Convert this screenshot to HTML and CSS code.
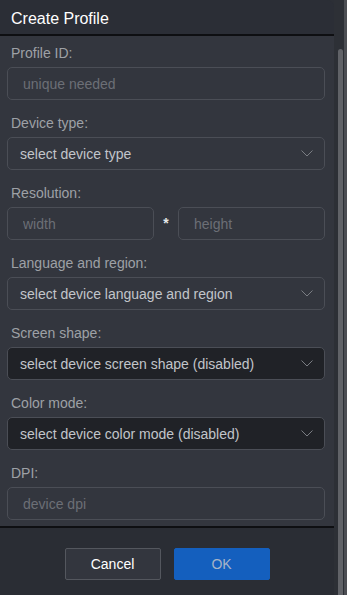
FILE: index.html
```
<!DOCTYPE html>
<html lang="en">
<head>
<meta charset="UTF-8" />
<meta name="viewport" content="width=device-width, initial-scale=1" />
<title>Create Profile</title>
<link rel="stylesheet" href="styles.css">
</head>
<body>
<div class="screen">
  <div class="dialog">
    <div class="dialog-header">Create Profile</div>

    <div class="dialog-body">
      <div class="field">
        <label>Profile ID:</label>
        <input class="text-input" type="text" placeholder="unique needed" />
      </div>

      <div class="field">
        <label>Device type:</label>
        <div class="select">
          <span>select device type</span>
          <svg width="12" height="7" viewBox="0 0 12 7"><path d="M0.5 0.5 L6 6 L11.5 0.5" fill="none" stroke="#7a7d83" stroke-width="1" /></svg>
        </div>
      </div>

      <div class="field">
        <label>Resolution:</label>
        <div class="resolution">
          <input class="text-input" type="text" placeholder="width" />
          <span class="times">*</span>
          <input class="text-input" type="text" placeholder="height" />
        </div>
      </div>

      <div class="field">
        <label>Language and region:</label>
        <div class="select">
          <span>select device language and region</span>
          <svg width="12" height="7" viewBox="0 0 12 7"><path d="M0.5 0.5 L6 6 L11.5 0.5" fill="none" stroke="#7a7d83" stroke-width="1" /></svg>
        </div>
      </div>

      <div class="field">
        <label>Screen shape:</label>
        <div class="select disabled">
          <span>select device screen shape (disabled)</span>
          <svg width="12" height="7" viewBox="0 0 12 7"><path d="M0.5 0.5 L6 6 L11.5 0.5" fill="none" stroke="#7a7d83" stroke-width="1" /></svg>
        </div>
      </div>

      <div class="field">
        <label>Color mode:</label>
        <div class="select disabled">
          <span>select device color mode (disabled)</span>
          <svg width="12" height="7" viewBox="0 0 12 7"><path d="M0.5 0.5 L6 6 L11.5 0.5" fill="none" stroke="#7a7d83" stroke-width="1" /></svg>
        </div>
      </div>

      <div class="field">
        <label>DPI:</label>
        <input class="text-input" type="text" placeholder="device dpi" />
      </div>
    </div>

    <div class="dialog-footer">
      <button class="btn btn-cancel">Cancel</button>
      <button class="btn btn-ok">OK</button>
    </div>
  </div>

  <div class="scrollbar">
    <div class="scroll-track"><div class="scroll-thumb"></div></div>
    <div class="scroll-edge"></div>
  </div>
</div>
</body>
</html>
```

FILE: styles.css
```
* {
  box-sizing: border-box;
}
html, body {
  margin: 0;
  height: 100%;
  overflow: hidden;
}
body {
  font-family: "Liberation Sans", Arial, sans-serif;
  background-color: #2c2f36;
}
.screen {
  display: flex;
  height: 595px;
}
.dialog {
  width: 334px;
  display: flex;
  flex-direction: column;
  border-top-right-radius: 7px;
  overflow: hidden;
}
.dialog-header {
  height: 36px;
  padding: 10px 11px 0;
  background-color: #2b2e36;
  border-bottom: 2px solid #0e0f12;
  color: #ffffff;
  font-size: 16px;
  line-height: 18px;
}
.dialog-body {
  background-color: #33363e;
  padding: 7px 9px 6px 7px;
}
.field {
  margin-bottom: 13px;
}
.field:last-child {
  margin-bottom: 0;
}
.field label {
  display: block;
  height: 20px;
  line-height: 20px;
  margin-bottom: 4px;
  padding-left: 4px;
  font-size: 14px;
  color: #9ea1a6;
}
.text-input {
  display: block;
  width: 100%;
  height: 33px;
  padding: 0 15px;
  background-color: #33363e;
  border: 1px solid #4b4e56;
  border-radius: 5px;
  font-family: inherit;
  font-size: 14px;
  color: #c4c7cc;
  outline: none;
}
.text-input::placeholder {
  color: #6c6f76;
}
.select {
  display: flex;
  align-items: center;
  justify-content: space-between;
  height: 33px;
  padding: 0 11px 0 12px;
  border: 1px solid #4b4e56;
  border-radius: 5px;
  font-size: 14px;
  color: #c2c5ca;
}
.select.disabled {
  background-color: #202227;
}
.resolution {
  display: grid;
  grid-template-columns: 1fr 24px 1fr;
}
.times {
  text-align: center;
  color: #e6e7e9;
  font-size: 14px;
  font-weight: bold;
  line-height: 33px;
}
.dialog-footer {
  flex-grow: 1;
  background-color: #2a2d34;
  border-top: 2px solid #0e0f12;
  padding-top: 20px;
  display: flex;
  justify-content: center;
  align-items: flex-start;
  gap: 13px;
}
.btn {
  width: 96px;
  height: 32px;
  border-radius: 2px;
  font-family: inherit;
  font-size: 14px;
  cursor: pointer;
}
.btn-cancel {
  background-color: #33363e;
  border: 1px solid #54575e;
  color: #ffffff;
}
.btn-ok {
  background-color: #145fbe;
  border: 1px solid #145fbe;
  color: #a7b4c7;
}
.scrollbar {
  flex-grow: 1;
  display: flex;
}
.scroll-track {
  width: 10px;
  background-color: #2d3036;
  padding: 49px 1px 0 4px;
}
.scroll-thumb {
  height: 100%;
  background-color: #616368;
  border-radius: 3px 3px 0 0;
}
.scroll-edge {
  flex-grow: 1;
  background-color: #4c4e53;
}
```
